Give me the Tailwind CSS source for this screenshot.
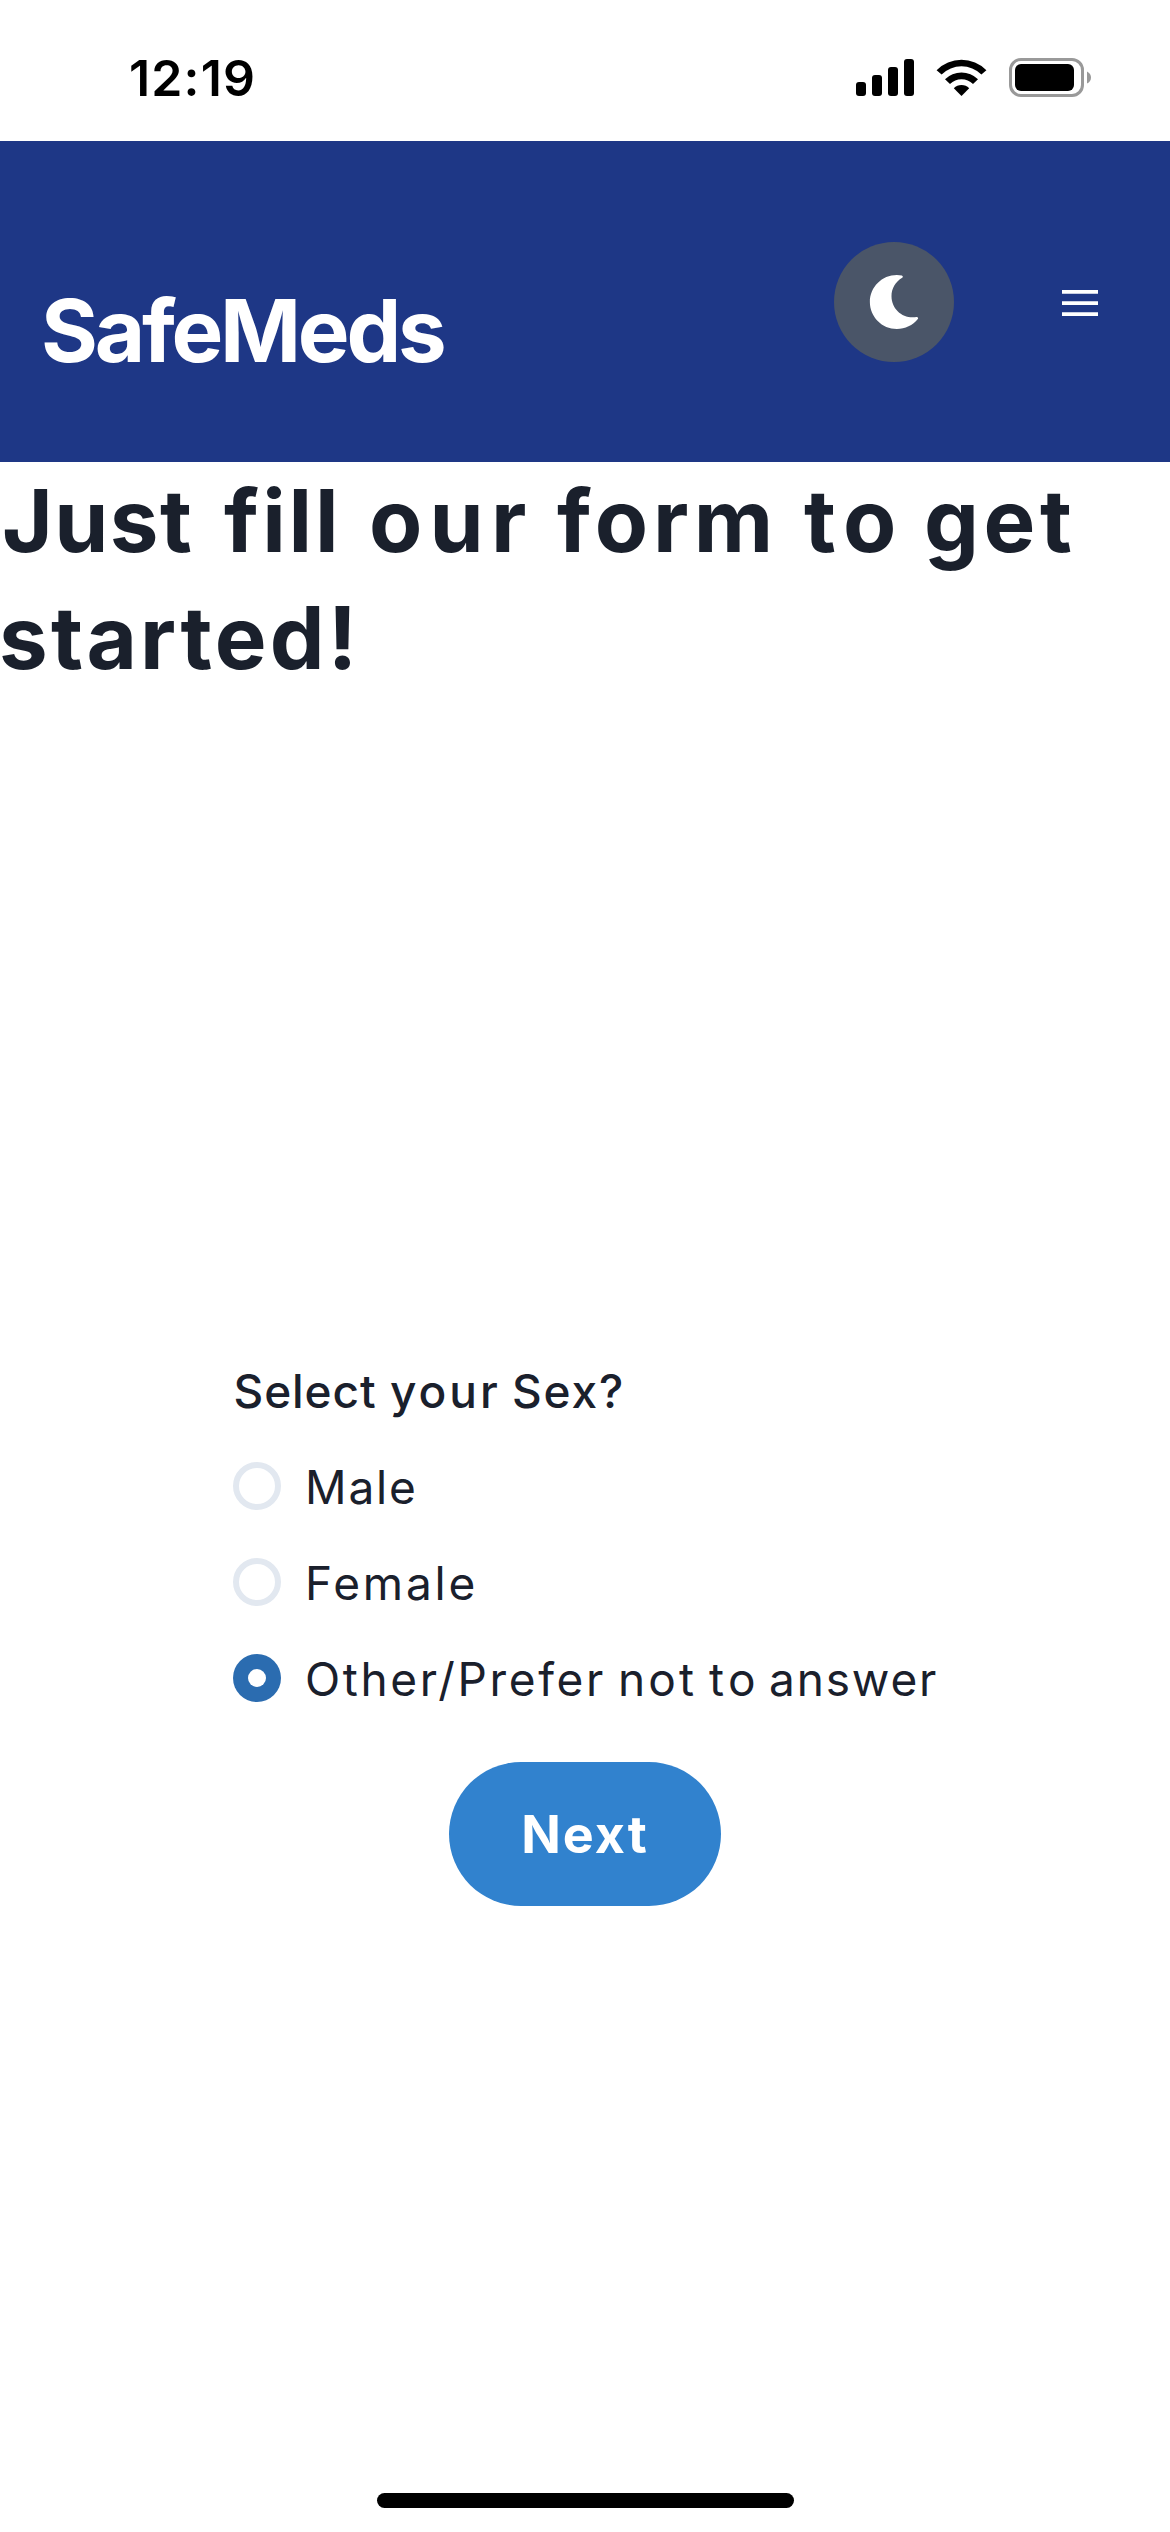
<!DOCTYPE html>
<html lang="en">
<head>
<meta charset="utf-8">
<title>SafeMeds</title>
<script src="https://cdn.jsdelivr.net/npm/@tailwindcss/browser@4"></script>
</head>
<body class="bg-white">
<div class="flex h-[2532px] w-[1170px] flex-col overflow-hidden bg-white font-['Inter',sans-serif] text-[#1a202c]">
  <!-- Status bar -->
  <div class="flex h-[141px] shrink-0 items-start justify-between pl-[129px] pr-[78px] pt-12 text-black">
    <span class="text-[50px] font-semibold leading-[60px] tracking-[1.16px]">12:19</span>
    <svg class="mt-[7px] h-[48px] w-[240px]" viewBox="852 55 240 48">
      <rect x="856" y="82" width="10" height="14" rx="3"/>
      <rect x="872" y="75" width="10" height="21" rx="3"/>
      <rect x="888" y="67" width="10" height="29" rx="3"/>
      <rect x="904" y="59" width="10" height="37" rx="3"/>
      <path d="M936.6 70.2A35 35 0 0 1 986.4 70.2L981.4 74.4A28.500 28.500 0 0 0 941.6 74.400Z"/>
      <path d="M945 79.200A23.500 23.500 0 0 1 978 79.200L973 83.900A16.500 16.500 0 0 0 950 83.900Z"/>
      <path d="M953.800 88.200A11 11 0 0 1 969.200 88.200L961.500 96Z"/>
      <rect x="1010.500" y="59.500" width="72" height="36" rx="10.500" fill="none" stroke="#999" stroke-width="3"/>
      <rect x="1015" y="64" width="59" height="27" rx="6"/>
      <path d="M1087 71.500Q1091 73.500 1091 77.500T1087 83.500Z" fill="#999"/>
    </svg>
  </div>

  <!-- Header -->
  <header class="flex h-[321px] shrink-0 items-start bg-[#1e3786] pl-[41px] text-white">
    <span class="mt-[136px] w-[793px] text-[87px] font-bold leading-[108px] tracking-[-3.25px]">SafeMeds</span>
    <button class="mt-[101px] flex size-[120px] items-center justify-center rounded-full bg-[#4a5568]">
      <svg class="size-[54px]" viewBox="0 0 512 512" fill="currentColor"><path d="M283.211 512c78.962 0 151.079-35.925 198.857-94.792 7.068-8.708-.639-21.430-11.562-19.350-124.203 23.654-238.262-71.576-238.262-196.954 0-72.222 38.662-138.635 101.498-174.394 9.686-5.512 7.250-20.197-3.756-22.230A258.156 258.156 0 0 0 283.211 0c-141.309 0-256 114.511-256 256 0 141.309 114.511 256 256 256z"/></svg>
    </button>
    <button class="ml-[108px] mt-[149px]">
      <svg class="h-[26px] w-[36px]" viewBox="0 0 36 26" fill="currentColor"><path d="M0 0h36v3.700H0zM0 11.200h36v3.700H0zM0 22.200h36v3.700H0z"/></svg>
    </button>
  </header>

  <!-- Title -->
  <h1 class="h-[893px] shrink-0 text-[87px] font-bold leading-[117px]">
    <span class="flex pl-[2px]">
      <span class="w-[222px] tracking-[1.43px]">Just</span>
      <span class="w-[145px] tracking-[2.83px]">fill</span>
      <span class="w-[188px] tracking-[7.2px]">our</span>
      <span class="w-[247px] tracking-[4.9px]">form</span>
      <span class="w-[120px] tracking-[8px]">to</span>
      <span class="tracking-[4.6px]">get</span>
    </span>
    <span class="-ml-px block tracking-[3.2px]">started!</span>
  </h1>

  <!-- Form -->
  <form class="flex shrink-0 flex-col items-center text-[46px] leading-[72px]">
    <div class="flex w-[704px] flex-col">
      <div class="mb-[23px] flex pl-[0.5px] font-medium">
        <span class="w-[156.5px] tracking-[0.92px]">Select</span>
        <span class="w-[122px] tracking-[2.99px]">your</span>
        <span class="tracking-[1.87px]">Sex?</span>
      </div>
      <div class="flex flex-col gap-6">
        <label class="flex h-[72px] items-center gap-6"><span class="size-12 rounded-full border-6 border-[#e2e8f0]"></span><span class="pt-[2px] tracking-[1.83px]">Male</span></label>
        <label class="flex h-[72px] items-center gap-6"><span class="size-12 rounded-full border-6 border-[#e2e8f0]"></span><span class="pt-[2px] tracking-[2.82px]">Female</span></label>
        <label class="flex h-[72px] items-center gap-6">
          <span class="flex size-12 shrink-0 items-center justify-center rounded-full bg-[#2b6cb0]"><span class="size-[18px] rounded-full bg-white"></span></span>
          <span class="flex pt-[2px]">
            <span class="w-[313px] tracking-[2.65px]">Other/Prefer</span>
            <span class="w-[91px] tracking-[3.12px]">not</span>
            <span class="w-[60px] tracking-[4.4px]">to</span>
            <span class="tracking-[1.82px]">answer</span>
          </span>
        </label>
      </div>
    </div>
    <button type="button" class="mt-12 h-36 w-[272px] rounded-full bg-[#3182ce] pt-[2px] text-[52px] font-bold tracking-[2.01px] text-white">Next</button>
  </form>

  <!-- Home indicator -->
  <div class="mx-auto mb-6 mt-auto h-[15px] w-[417px] rounded-full bg-black"></div>
</div>
</body>
</html>
